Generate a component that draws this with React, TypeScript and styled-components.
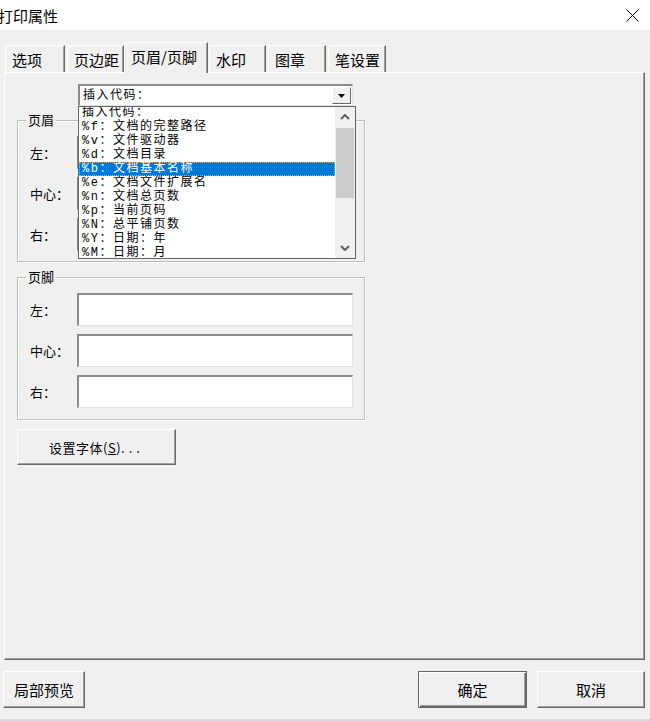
import { createGlobalStyle, styled } from "styled-components";

const GlobalStyle = createGlobalStyle`
  html, body {
    margin: 0;
    padding: 0;
    background: #f0f0f0;
  }
  * {
    box-sizing: border-box;
  }
`;

const Window = styled.div`
  width: 650px;
  height: 721px;
  display: flex;
  flex-direction: column;
  background: #f0f0f0;
  overflow: hidden;
  font-family: "Noto Sans CJK SC", sans-serif;
  color: #000;
`;

const TitleBar = styled.div`
  height: 30px;
  flex: none;
  background: #fff;
  display: flex;
  align-items: center;
  justify-content: space-between;
  padding: 0 11px 0 0;
`;

const Title = styled.span`
  font-size: 15px;
  margin-left: -2px;
  line-height: 1;
`;

const Body = styled.div`
  flex: 1;
  display: flex;
  flex-direction: column;
  padding: 12px 5px 0 4px;
`;

const TabStrip = styled.div`
  height: 30px;
  display: flex;
  align-items: flex-end;
  padding-left: 1px;
  position: relative;
  z-index: 2;
`;

const Tab = styled.div<{ $active?: boolean; $w: number; $gap?: number }>`
  width: ${(p) => p.$w}px;
  margin-right: ${(p) => p.$gap ?? 2}px;
  height: ${(p) => (p.$active ? 31 : 27)}px;
  margin-bottom: ${(p) => (p.$active ? -1 : 0)}px;
  padding: 0 0 ${(p) => (p.$active ? 4 : 0)}px 6px;
  display: flex;
  align-items: center;
  font-size: 15px;
  background: #f0f0f0;
  border-top: 1px solid #fff;
  border-left: 1px solid #fff;
  border-right: 1px solid #696969;
  box-shadow: inset -1px 0 0 #a0a0a0;
  white-space: nowrap;
`;

const Panel = styled.div`
  height: 588px;
  position: relative;
  border-top: 1px solid #fff;
  border-left: 1px solid #fff;
  border-right: 1px solid #696969;
  border-bottom: 1px solid #696969;
  box-shadow: inset -1px -1px 0 #a0a0a0;
  padding: 11px 0 0 12px;
`;

const Combo = styled.div`
  width: 275px;
  height: 22px;
  margin-left: 61px;
  background: #fff;
  border-top: 2px solid #8c8c8c;
  border-left: 2px solid #8c8c8c;
  border-right: 1px solid #e3e3e3;
  border-bottom: 1px solid #e3e3e3;
  display: flex;
  align-items: center;
`;

const CodeText = styled.span`
  flex: 1;
  padding-left: 3px;
  font-family: "Liberation Mono", "Noto Sans CJK SC", monospace;
  font-size: 12px;
  letter-spacing: 1.5px;
  line-height: 14px;
  white-space: nowrap;
`;

const DropButton = styled.div`
  width: 19px;
  height: 17px;
  margin-right: 1px;
  background: #f0f0f0;
  border-top: 1px solid #fff;
  border-left: 1px solid #fff;
  border-right: 1px solid #696969;
  border-bottom: 1px solid #696969;
  display: flex;
  align-items: center;
  justify-content: center;
`;

const DropList = styled.div`
  position: absolute;
  left: 73px;
  top: 33px;
  width: 278px;
  height: 153px;
  background: #fff;
  border: 1px solid #646464;
  display: flex;
  z-index: 3;
`;

const Items = styled.div`
  flex: 1;
  overflow: hidden;
`;

const ItemsInner = styled.div`
  margin-top: -1px;
`;

const Item = styled.div<{ $selected?: boolean }>`
  height: 14px;
  padding-left: 3px;
  font-family: "Liberation Mono", "Noto Sans CJK SC", monospace;
  font-size: 12px;
  letter-spacing: 1.5px;
  line-height: 14px;
  white-space: nowrap;
  background: ${(p) => (p.$selected ? "#0078d7" : "transparent")};
  color: ${(p) => (p.$selected ? "#fff" : "#000")};
  outline: ${(p) => (p.$selected ? "1px dotted #f3a33a" : "none")};
  outline-offset: -1px;
`;

const ScrollBar = styled.div`
  width: 20px;
  background: #f0f0f0;
  display: flex;
  flex-direction: column;
`;

const ScrollArrow = styled.div`
  height: 20px;
  display: flex;
  align-items: center;
  justify-content: center;
`;

const ScrollTrack = styled.div`
  flex: 1;
  padding: 1px 1px;
`;

const Thumb = styled.div`
  height: 70px;
  background: #cdcdcd;
`;

const Group = styled.fieldset<{ $top: number; $bottom: number }>`
  width: 348px;
  margin: ${(p) => p.$top}px 0 0 0;
  padding: 8px 0 ${(p) => p.$bottom}px 12px;
  border: 1px solid #bdbdbd;
  box-shadow: inset 1px 1px 0 #fff, 1px 1px 0 #fff;
  min-width: 0;
`;

const Legend = styled.legend`
  font-size: 13px;
  line-height: 16px;
  padding: 0 2px;
  margin-left: -4px;
`;

const Rows = styled.div`
  display: grid;
  grid-template-columns: 47px 276px;
  grid-auto-rows: 33px;
  row-gap: 8px;
  align-items: center;
`;

const Label = styled.span`
  font-size: 13px;
`;

const Field = styled.div`
  height: 33px;
  background: #fff;
  border-top: 2px solid #8c8c8c;
  border-left: 2px solid #8c8c8c;
  border-right: 1px solid #e3e3e3;
  border-bottom: 1px solid #e3e3e3;
`;

const Button = styled.div<{ $w: number; $h?: number; $default?: boolean; $size?: number }>`
  width: ${(p) => p.$w}px;
  height: ${(p) => p.$h ?? 37}px;
  display: flex;
  align-items: center;
  justify-content: center;
  font-size: ${(p) => p.$size ?? 15}px;
  background: #f0f0f0;
  ${(p) =>
    p.$default
      ? `border: 1px solid #646464;
         box-shadow: inset 1px 1px 0 #fff, inset -1px -1px 0 #696969, inset -2px -2px 0 #a0a0a0;`
      : `border-top: 1px solid #fff;
         border-left: 1px solid #fff;
         border-right: 1px solid #696969;
         border-bottom: 1px solid #696969;
         box-shadow: inset -1px -1px 0 #a0a0a0;`}
`;

const FontButton = styled(Button)`
  margin-top: 9px;
  letter-spacing: 0.5px;
`;

const Dots = styled.span`
  letter-spacing: 4px;
`;

const ButtonRow = styled.div`
  display: flex;
  gap: 10px;
  margin: 11px 0 0 -1px;
`;

const Spacer = styled.div`
  flex: 1;
`;

const BottomEdge = styled.div`
  height: 2px;
  flex: none;
  background: #d3dae2;
`;

const codes = [
  "插入代码：",
  "%f：文档的完整路径",
  "%v：文件驱动器",
  "%d：文档目录",
  "%b：文档基本名称",
  "%e：文档文件扩展名",
  "%n：文档总页数",
  "%p：当前页码",
  "%N：总平铺页数",
  "%Y：日期：年",
  "%M：日期：月",
];

function FieldRows() {
  return (
    <Rows>
      <Label>左：</Label>
      <Field />
      <Label>中心：</Label>
      <Field />
      <Label>右：</Label>
      <Field />
    </Rows>
  );
}

function App() {
  return (
    <Window>
      <GlobalStyle />
      <TitleBar>
        <Title>打印属性</Title>
        <svg width="13" height="13" viewBox="0 0 13 13">
          <path d="M0.5 0.5 L12.5 12.5 M12.5 0.5 L0.5 12.5" stroke="#000" strokeWidth="1" />
        </svg>
      </TitleBar>
      <Body>
        <TabStrip>
          <Tab $w={60}>选项</Tab>
          <Tab $w={57} $gap={0}>页边距</Tab>
          <Tab $w={84} $active $gap={1}>页眉/页脚</Tab>
          <Tab $w={57} $gap={2}>水印</Tab>
          <Tab $w={58} $gap={2}>图章</Tab>
          <Tab $w={58}>笔设置</Tab>
        </TabStrip>
        <Panel>
          <Combo>
            <CodeText>插入代码：</CodeText>
            <DropButton>
              <svg width="7" height="4" viewBox="0 0 7 4">
                <path d="M0 0 H7 L3.5 4 Z" fill="#000" />
              </svg>
            </DropButton>
          </Combo>
          <DropList>
            <Items>
              <ItemsInner>
                {codes.map((c, i) => (
                  <Item key={c} $selected={i === 4}>
                    {c}
                  </Item>
                ))}
              </ItemsInner>
            </Items>
            <ScrollBar>
              <ScrollArrow>
                <svg width="10" height="6" viewBox="0 0 10 6">
                  <polyline points="1,5 5,1 9,5" fill="none" stroke="#606060" strokeWidth="2" />
                </svg>
              </ScrollArrow>
              <ScrollTrack>
                <Thumb />
              </ScrollTrack>
              <ScrollArrow>
                <svg width="10" height="6" viewBox="0 0 10 6">
                  <polyline points="1,1 5,5 9,1" fill="none" stroke="#606060" strokeWidth="2" />
                </svg>
              </ScrollArrow>
            </ScrollBar>
          </DropList>
          <Group $top={6} $bottom={10}>
            <Legend>页眉</Legend>
            <FieldRows />
          </Group>
          <Group $top={7} $bottom={11}>
            <Legend>页脚</Legend>
            <FieldRows />
          </Group>
          <FontButton $w={159} $h={36} $size={13}>
            设置字体(<u>S</u>)<Dots>...</Dots>
          </FontButton>
        </Panel>
        <ButtonRow>
          <Button $w={82}>局部预览</Button>
          <Spacer />
          <Button $w={109} $default>
            确定
          </Button>
          <Button $w={108}>取消</Button>
        </ButtonRow>
      </Body>
      <BottomEdge />
    </Window>
  );
}

export default App;
